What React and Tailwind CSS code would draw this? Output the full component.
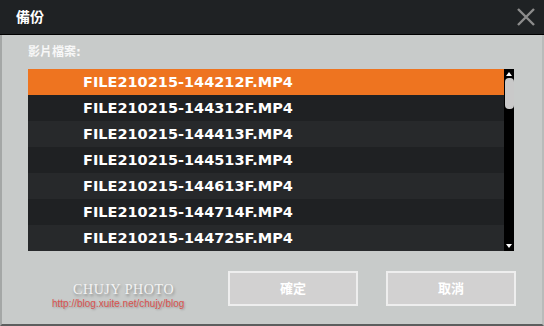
import React from 'react';

const files = [
  "FILE210215-144212F.MP4",
  "FILE210215-144312F.MP4",
  "FILE210215-144413F.MP4",
  "FILE210215-144513F.MP4",
  "FILE210215-144613F.MP4",
  "FILE210215-144714F.MP4",
  "FILE210215-144725F.MP4",
];

// Row background: first is the selected one, the rest alternate
const rowBg = (i) => {
  if (i === 0) return "bg-[#ee7420]";
  return i % 2 === 1 ? "bg-[#1f2123]" : "bg-[#27292b]";
};

function Scrollbar() {
  return (
    <div className="w-[10px] h-full bg-black flex flex-col items-center">
      <svg width="10" height="8" viewBox="0 0 10 8" className="mt-[1px]">
        <path d="M5 2 L8 6 L2 6 Z" fill="#ffffff" />
      </svg>
      <div className="w-[9px] h-[31px] rounded-[4px] bg-[#c9c9c9]" />
      <div className="flex-1" />
      <svg width="10" height="8" viewBox="0 0 10 8" className="mb-[1px]">
        <path d="M2 2 L8 2 L5 6 Z" fill="#ffffff" />
      </svg>
    </div>
  );
}

export default function App() {
  return (
    <div className="w-[544px] h-[326px] flex flex-col overflow-hidden" style={{ fontFamily: '"DejaVu Sans", "Noto Sans CJK TC", sans-serif' }}>
      {/* Title bar */}
      <div className="h-[35px] shrink-0 bg-[#1f2224] border-b border-black flex items-center justify-between pl-[16px] pr-[8px]">
        <span className="text-white text-[14px] font-bold leading-none">備份</span>
        <svg width="20" height="20" viewBox="0 0 20 20">
          <path d="M2 2 L18 18 M18 2 L2 18" stroke="#8c8c8c" strokeWidth="2.4" />
        </svg>
      </div>

      {/* Body */}
      <div className="flex-1 bg-[#c8cbca] border-l-2 border-r-2 border-b-2 border-l-[#a4a7a6] border-r-[#b8bbba] border-b-[#5c5e5e] px-[26px] pt-[9px]">
        <div className="text-[#f7f7f7] text-[12px] font-bold leading-[16px]">影片檔案:</div>

        <div className="mt-[9px] h-[182px] flex">
          <div className="w-[476px] flex flex-col">
            {files.map((f, i) => (
              <div key={f} className={`h-[26px] flex items-center pl-[55px] ${rowBg(i)}`}>
                <span className="text-white text-[14.5px] font-bold leading-none">{f}</span>
              </div>
            ))}
          </div>
          <Scrollbar />
        </div>

        <div className="mt-[20px] flex">
          <div className="flex-1 pl-[45px] pt-[11px] flex flex-col">
            <span className="text-[#f4f4f4] text-[14px] tracking-[0.6px] leading-[16px] [text-shadow:1px_2px_3px_rgba(0,0,0,0.35)]" style={{ fontFamily: '"Liberation Serif", serif' }}>CHUJY PHOTO</span>
            <span className="text-[#d9534f] text-[10px] leading-[12px] -ml-[21px] [text-shadow:1px_1px_2px_rgba(0,0,0,0.25)]" style={{ fontFamily: '"Liberation Sans", sans-serif' }}>http://blog.xuite.net/chujy/blog</span>
          </div>
          <div className="flex gap-[28px]">
            <button className="w-[130px] h-[35px] border-2 border-[#eeeeee] bg-[#d2d1d1] text-white text-[13px] font-bold">確定</button>
            <button className="w-[130px] h-[35px] border-2 border-[#eeeeee] bg-[#d2d1d1] text-white text-[13px] font-bold">取消</button>
          </div>
        </div>
      </div>
    </div>
  );
}
